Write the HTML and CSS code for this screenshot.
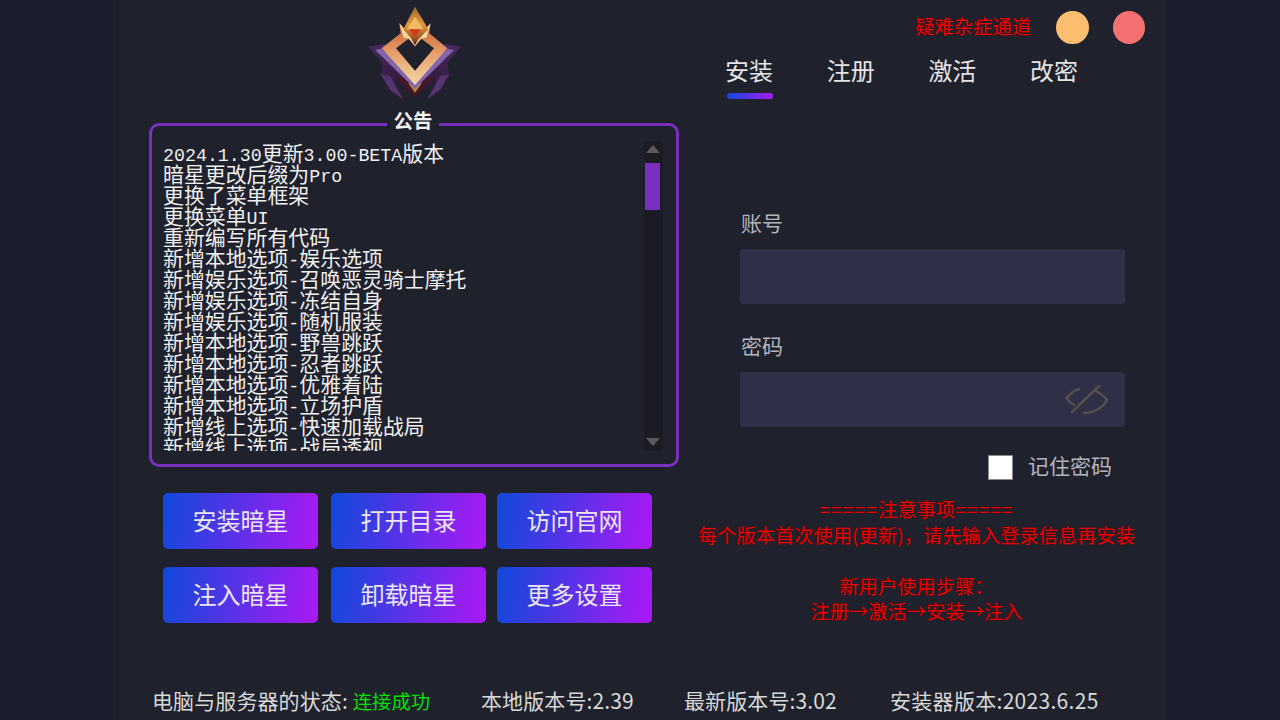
FILE: index.html
```html
<!DOCTYPE html>
<html lang="zh-CN">
<head>
    <meta charset="UTF-8">
    <title>安装器</title>
    <link rel="stylesheet" href="styles.css">
</head>
<body>
    <div class="app">
        <div class="left">
            <svg class="logo" viewBox="0 0 450 300" width="150" height="100">
                <defs>
                    <linearGradient id="vGold" x1="0" y1="0" x2="0" y2="1">
                        <stop offset="0" stop-color="#c9622f"/>
                        <stop offset="0.45" stop-color="#e49a66"/>
                        <stop offset="1" stop-color="#f3d9a8"/>
                    </linearGradient>
                    <linearGradient id="gem" x1="0" y1="0" x2="0" y2="1">
                        <stop offset="0" stop-color="#9a6836"/>
                        <stop offset="0.5" stop-color="#e59a3c"/>
                        <stop offset="1" stop-color="#8a3a1c"/>
                    </linearGradient>
                    <linearGradient id="wing" x1="0" y1="0" x2="0" y2="1">
                        <stop offset="0" stop-color="#4a2a60"/>
                        <stop offset="1" stop-color="#26162f"/>
                    </linearGradient>
                </defs>
                <path d="M85 140 L135 132 L225 240 L315 132 L362 140 L322 190 L328 225 L290 292 L285 240 L225 290 L165 240 L192 298 L160 280 L122 225 L128 190 Z" fill="url(#wing)"/>
                <path d="M122 222 L150 228 L190 298 L150 270 Z M328 222 L300 228 L262 298 L300 270 Z" fill="#54336f"/>
                <path d="M170 232 L225 290 L280 232 L262 232 L225 272 L188 232 Z" fill="#4c1620"/>
                <path d="M205 250 L245 250 L225 278 Z" fill="#a98a52"/>
                <path d="M106 150 L125 146 L225 240 L322 146 L342 150 L225 266 Z" fill="#8466ac"/>
                <path d="M225 255 L125 145 L182 100 L178 70 L205 100 L225 135 L245 100 L272 70 L268 100 L322 145 Z" fill="url(#vGold)"/>
                <path d="M225 212 L168 145 L206 116 L225 140 L244 116 L282 145 Z" fill="#1f212c"/>
                <path d="M178 70 L205 100 L225 135 L206 116 L190 112 Z M272 70 L245 100 L225 135 L244 116 L260 112 Z" fill="#f0d8a0"/>
                <path d="M225 20 L265 88 L225 128 L190 88 Z" fill="url(#gem)"/>
                <path d="M225 50 L250 88 L200 88 Z" fill="#f0bb62"/>
                <path d="M208 88 L242 88 L225 112 Z" fill="#cf3a1c"/>
            </svg>
            <fieldset class="notice">
                <legend>公告</legend>
                <div class="notice-body">
                    <div class="notice-text">
                        <div><span class="mono">2024.1.30</span>更新<span class="mono">3.00-BETA</span>版本</div>
                        <div>暗星更改后缀为<span class="mono">Pro</span></div>
                        <div>更换了菜单框架</div>
                        <div>更换菜单<span class="mono">UI</span></div>
                        <div>重新编写所有代码</div>
                        <div>新增本地选项<span class="mono">-</span>娱乐选项</div>
                        <div>新增娱乐选项<span class="mono">-</span>召唤恶灵骑士摩托</div>
                        <div>新增娱乐选项<span class="mono">-</span>冻结自身</div>
                        <div>新增娱乐选项<span class="mono">-</span>随机服装</div>
                        <div>新增本地选项<span class="mono">-</span>野兽跳跃</div>
                        <div>新增本地选项<span class="mono">-</span>忍者跳跃</div>
                        <div>新增本地选项<span class="mono">-</span>优雅着陆</div>
                        <div>新增本地选项<span class="mono">-</span>立场护盾</div>
                        <div>新增线上选项<span class="mono">-</span>快速加载战局</div>
                        <div>新增线上选项<span class="mono">-</span>战局透视</div>
                    </div>
                    <div class="scrollbar">
                        <span class="arrow-up"></span>
                        <span class="thumb"></span>
                        <span class="arrow-down"></span>
                    </div>
                </div>
            </fieldset>
            <div class="actions">
                <button>安装暗星</button>
                <button>打开目录</button>
                <button>访问官网</button>
                <button>注入暗星</button>
                <button>卸载暗星</button>
                <button>更多设置</button>
            </div>
        </div>

        <div class="right">
            <div class="topbar">
                <span class="hotline">疑难杂症通道</span>
                <span class="dot dot-min"></span>
                <span class="dot dot-close"></span>
            </div>
            <div class="tabs">
                <div class="tab active">安装</div>
                <div class="tab">注册</div>
                <div class="tab">激活</div>
                <div class="tab">改密</div>
            </div>
            <div class="form">
                <label class="field-label first">账号</label>
                <div class="input"></div>
                <label class="field-label">密码</label>
                <div class="input">
                    <svg class="eye" viewBox="0 0 44 30" width="44" height="30" fill="none" stroke="#53514e" stroke-width="2.600" stroke-linecap="round">
                        <path d="M14 4 C8 6 4 10 1.500 13 C3 16 6 18 9 20"/>
                        <path d="M31 6 C36 9 40 12 42 15 C38 22 30 28 19 28"/>
                        <path d="M34 1 L7 27"/>
                    </svg>
                </div>
                <div class="remember">
                    <span class="checkbox"></span>
                    <span class="remember-text">记住密码</span>
                </div>
            </div>
            <div class="warning">
                <div><span class="rule">=====</span>注意事项<span class="rule">=====</span></div>
                <div>每个版本首次使用(更新)，请先输入登录信息再安装</div>
                <div>&nbsp;</div>
                <div>新用户使用步骤：</div>
                <div>注册→激活→安装→注入</div>
            </div>
        </div>

        <div class="footer">
            <span class="status">电脑与服务器的状态: <em>连接成功</em></span>
            <span class="local">本地版本号:2.39</span>
            <span class="latest">最新版本号:3.02</span>
            <span class="installer">安装器版本:2023.6.25</span>
        </div>
    </div>
</body>
</html>
```

FILE: styles.css
```css
* {
    box-sizing: border-box;
}
html, body {
    margin: 0;
    height: 720px;
    overflow: hidden;
}
body {
    background: #1a1d2b;
    font-family: "Noto Sans CJK SC", "Noto Sans", sans-serif;
}
.app {
    width: 1053px;
    height: 720px;
    margin-left: 113px;
    background: #1f212c;
    display: grid;
    grid-template-columns: 577px 476px;
    grid-template-rows: 1fr 33px;
    overflow: hidden;
}

/* left side */
.left {
    padding-left: 36px;
}
.logo {
    display: block;
    margin-left: 191px;
}
.notice {
    width: 530px;
    height: 357px;
    margin: 10px 0 0;
    padding: 0 13px 9px 11px;
    border: 3px solid #7a2fbe;
    border-radius: 10px;
}
.notice legend {
    margin: 0 auto;
    padding: 0 6px 8px;
    color: #f2f2f2;
    font-size: 19.500px;
    font-weight: 700;
    line-height: 20px;
}
.notice-body {
    display: flex;
    justify-content: space-between;
    height: 310px;
    margin-top: 3px;
}
.notice-text {
    padding-top: 1px;
    color: #f0f0f0;
    font-size: 20.900px;
    line-height: 21px;
    overflow: hidden;
    white-space: nowrap;
}
.mono {
    font-family: "Liberation Mono", monospace;
    font-size: 18.300px;
    line-height: 0;
}
.scrollbar {
    width: 19px;
    background: #1a1b24;
    display: flex;
    flex-direction: column;
    align-items: center;
    padding: 4px 3px 5px 1px;
}
.arrow-up, .arrow-down {
    width: 0;
    height: 0;
    border-left: 7px solid transparent;
    border-right: 7px solid transparent;
}
.arrow-up {
    border-bottom: 8px solid #5a5a5a;
}
.arrow-down {
    margin-top: auto;
    border-top: 8px solid #5a5a5a;
}
.thumb {
    width: 15px;
    height: 47px;
    margin-top: 10px;
    background: #7b2fbe;
}
.actions {
    display: grid;
    grid-template-columns: 168px 166px 155px;
    grid-auto-rows: 56px;
    row-gap: 18px;
    margin: 26px 0 0 14px;
}
.actions button {
    width: 155px;
    border: none;
    border-radius: 5px;
    padding: 0 0 4px;
    background: linear-gradient(100deg, #0f49da, #ad18f8);
    color: #ebe6f8;
    font-family: inherit;
    font-size: 24px;
}

/* right side */
.right {
    padding-top: 11px;
}
.topbar {
    display: flex;
    align-items: center;
    justify-content: flex-end;
    gap: 24px;
    height: 33px;
    padding-right: 21px;
}
.hotline {
    margin-right: 1px;
    padding-bottom: 3px;
    color: #f00000;
    font-size: 19.300px;
    text-shadow: 0 0 1px #5a0000;
}
.dot {
    width: 32.500px;
    height: 33px;
    border-radius: 50%;
}
.dot-min {
    background: #fdbf6f;
}
.dot-close {
    background: #f57070;
}
.tabs {
    display: flex;
    gap: 53.700px;
    margin-top: 9px;
    padding-left: 35px;
}
.tab {
    width: 48px;
    color: #e4e4e4;
    font-size: 24px;
    line-height: 34px;
}
.tab.active::after {
    content: "";
    display: block;
    width: 46px;
    height: 6px;
    margin: 6px 0 0 2px;
    border-radius: 3px;
    background: linear-gradient(90deg, #0f49da, #ad18f8);
}
.form {
    width: 385px;
    margin-left: 50px;
}
.field-label {
    display: block;
    margin: 26px 0 12px 1px;
    color: #b4b4be;
    font-size: 21px;
    line-height: 30px;
}
.field-label.first {
    margin-top: 108px;
}
.input {
    height: 55px;
    border-radius: 3px;
    background: #2f3047;
    display: flex;
    align-items: center;
    justify-content: flex-end;
    padding-right: 16px;
}
.remember {
    display: flex;
    align-items: center;
    justify-content: flex-end;
    gap: 15px;
    height: 26px;
    margin-top: 27px;
    padding-right: 13px;
    color: #b4b4be;
    font-size: 21px;
}
.remember-text {
    padding-bottom: 5px;
}
.checkbox {
    width: 25px;
    height: 25px;
    background: #fff;
    border: 1px solid #8a8a8a;
}
.warning {
    width: 453px;
    margin-top: 17px;
    color: #e60000;
    font-size: 19.300px;
    line-height: 25.500px;
    text-align: center;
    white-space: nowrap;
    text-shadow: 0 0 1px #5a0000;
}
.rule {
    letter-spacing: 1px;
}

/* status line */
.footer {
    grid-column: 1 / 3;
    color: #d8d8d8;
    font-size: 21px;
    line-height: 26px;
    letter-spacing: 0.100px;
    white-space: nowrap;
    display: flex;
    padding-left: 39px;
}
.footer em {
    color: #00e000;
    font-style: normal;
    font-size: 19.300px;
}
.status {
    width: 329px;
}
.local {
    width: 203px;
}
.latest {
    width: 206px;
}
.installer {
    letter-spacing: 0.300px;
}
```
